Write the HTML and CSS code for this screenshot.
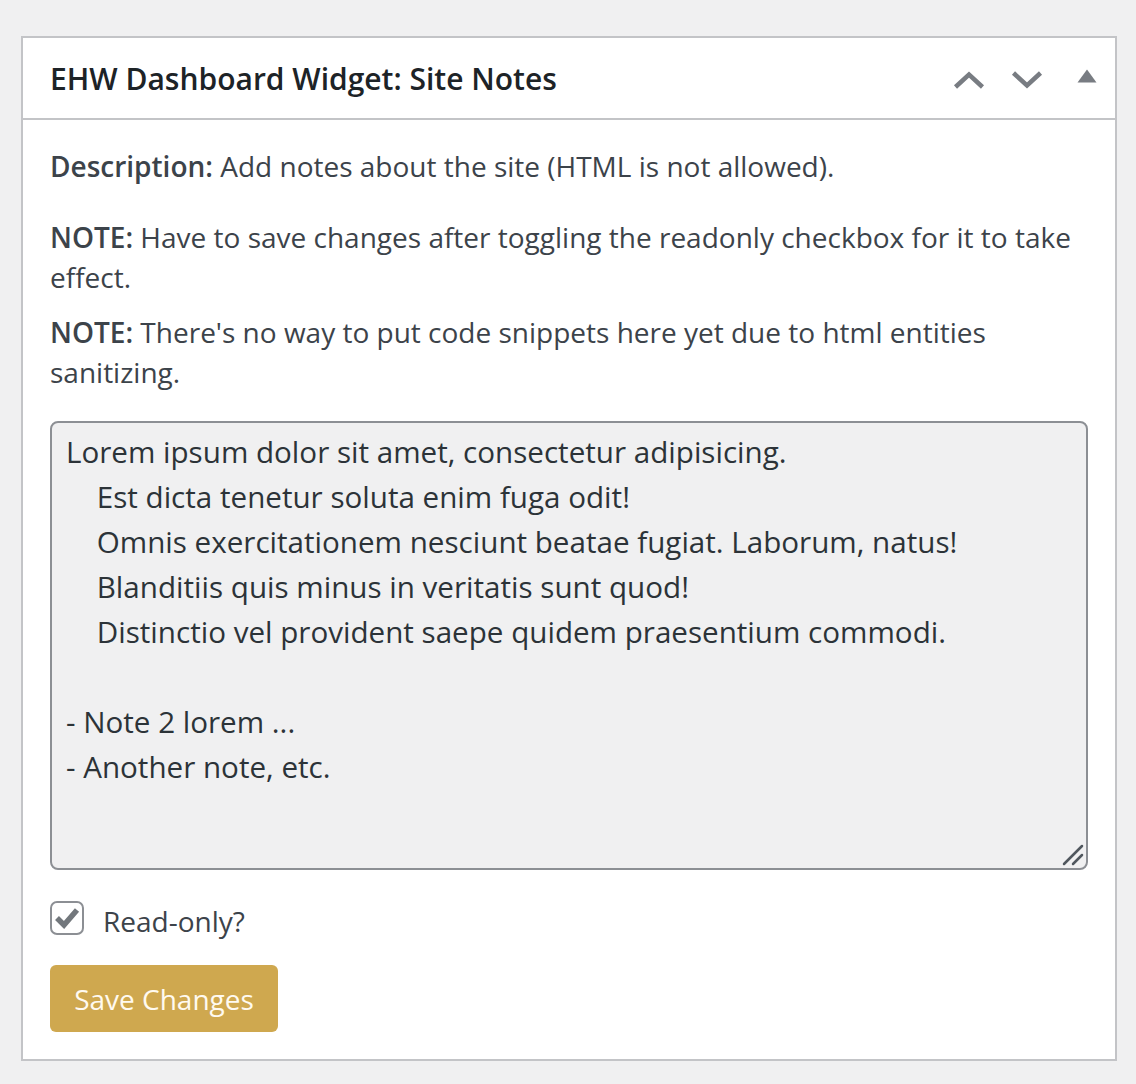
FILE: index.html
```html
<!DOCTYPE html>
<html lang="en">
<head>
<meta charset="utf-8">
<title>Site Notes</title>
<link rel="stylesheet" href="styles.css">
</head>
<body>
<div class="postbox">
  <div class="postbox-header">
    <h2 class="title">EHW Dashboard Widget: Site Notes</h2>
    <div class="handle-actions">
      <button class="handle-btn" aria-label="Move up">
        <svg width="32" height="20" viewBox="0 0 32 20"><polyline points="2.5,17 16,4.5 29.5,17" fill="none" stroke="#787c82" stroke-width="4.5"/></svg>
      </button>
      <button class="handle-btn" aria-label="Move down">
        <svg width="32" height="20" viewBox="0 0 32 20"><polyline points="2.5,3 16,15.5 29.5,3" fill="none" stroke="#787c82" stroke-width="4.5"/></svg>
      </button>
      <button class="handle-btn toggle" aria-label="Toggle panel">
        <svg width="20" height="14" viewBox="0 0 20 14"><polygon points="10,0.5 19.5,13.5 0.5,13.5" fill="#787c82"/></svg>
      </button>
    </div>
  </div>
  <div class="inside">
    <p class="desc"><strong>Description:</strong> Add notes about the site (HTML is not allowed).</p>
    <p class="note first"><strong>NOTE:</strong> Have to save changes after toggling the readonly checkbox for it to take effect.</p>
    <p class="note"><strong>NOTE:</strong> There's no way to put code snippets here yet due to html entities sanitizing.</p>
    <div class="notes-wrap">
      <textarea class="notes" readonly>Lorem ipsum dolor sit amet, consectetur adipisicing.
    Est dicta tenetur soluta enim fuga odit!
    Omnis exercitationem nesciunt beatae fugiat. Laborum, natus!
    Blanditiis quis minus in veritatis sunt quod!
    Distinctio vel provident saepe quidem praesentium commodi.

- Note 2 lorem ...
- Another note, etc.</textarea>
      <svg class="grip" width="22" height="22" viewBox="0 0 22 22"><line x1="2" y1="20" x2="20" y2="2" stroke="#50575e" stroke-width="2.5" stroke-linecap="round"/><line x1="11" y1="20" x2="20" y2="11" stroke="#50575e" stroke-width="2.5" stroke-linecap="round"/></svg>
    </div>
    <label class="check-row">
      <span class="checkbox">
        <svg width="26" height="22" viewBox="0 0 26 22"><polyline points="3,11 10,18 23,3" fill="none" stroke="#72777c" stroke-width="5.5"/></svg>
      </span>
      <span class="check-label">Read-only?</span>
    </label>
    <div class="actions">
      <button class="save-btn">Save Changes</button>
    </div>
  </div>
</div>
</body>
</html>
```
FILE: styles.css
```css
html, body {
  margin: 0;
  padding: 0;
}
body {
  background: #f0f0f1;
  font-family: "Open Sans", "Noto Sans", sans-serif;
  color: #3c434a;
  padding: 36px 0 0 21px;
  height: 1084px;
  box-sizing: border-box;
}
.postbox {
  width: 1096px;
  height: 1025px;
  box-sizing: border-box;
  background: #fff;
  border: 2px solid #c3c4c7;
  display: flex;
  flex-direction: column;
}
.postbox-header {
  height: 82px;
  box-sizing: border-box;
  border-bottom: 2px solid #c3c4c7;
  display: flex;
  align-items: center;
  justify-content: space-between;
  padding: 0 18px 0 27px;
}
.title {
  margin: 0;
  font-size: 30px;
  font-weight: 600;
  color: #1d2327;
}
.handle-actions {
  display: flex;
  align-items: center;
}
.handle-btn {
  background: none;
  border: 0;
  padding: 0;
  width: 58px;
  height: 72px;
  display: flex;
  align-items: center;
  justify-content: center;
  cursor: pointer;
}
.handle-btn svg { display: block; margin-top: 4px; }
.handle-btn.toggle {
  width: 20px;
  margin-left: 21px;
}
.handle-btn.toggle svg { margin-top: -4px; }
.inside {
  padding: 26px 27px 0 27px;
  display: flex;
  flex-direction: column;
}
p {
  margin: 0;
  font-size: 28px;
  line-height: 40px;
}
p strong { font-weight: 600; }
.desc { margin-bottom: 31px; }
.note.first { margin-bottom: 15px; }
.notes-wrap {
  position: relative;
  margin-top: 29px;
  height: 449px;
}
.notes {
  display: block;
  height: 100%;
  box-sizing: border-box;
  width: 100%;
  margin: 0;
  border: 2px solid #8c8f94;
  border-radius: 8px;
  background: #f0f0f1;
  color: #2c3338;
  font-family: "Open Sans", "Noto Sans", sans-serif;
  font-size: 29.6px;
  line-height: 45px;
  padding: 6px 14px;
  resize: none;
  outline: none;
}
.grip {
  position: absolute;
  right: 4px;
  bottom: 4px;
  display: block;
}
.check-row {
  margin-top: 30px;
  display: flex;
  align-items: center;
  gap: 19px;
  height: 36px;
}
.checkbox {
  width: 34px;
  height: 34px;
  box-sizing: border-box;
  border: 2px solid #8c8f94;
  border-radius: 7px;
  display: flex;
  align-items: center;
  justify-content: center;
}
.checkbox svg { display: block; }
.check-label {
  font-size: 28px;
  color: #3c434a;
  margin-top: 6px;
}
.actions {
  margin-top: 29px;
}
.save-btn {
  width: 228px;
  height: 67px;
  background: #cfa84f;
  border: 0;
  border-radius: 6px;
  color: #fffaf0;
  font-family: "Open Sans", "Noto Sans", sans-serif;
  font-size: 28px;
  padding: 0;
  cursor: pointer;
}
```
